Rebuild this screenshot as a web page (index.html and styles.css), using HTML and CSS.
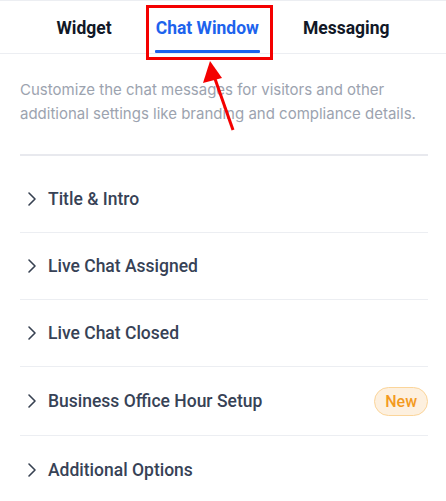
FILE: index.html
```html
<!DOCTYPE html>
<html lang="en">
<head>
  <meta charset="utf-8" />
  <meta name="viewport" content="width=device-width, initial-scale=1" />
  <title>Chat Window settings</title>
  <link rel="stylesheet" href="styles.css">
</head>
<body>
  <div class="panel">
    <div class="tabs">
      <div class="tab">Widget</div>
      <div class="tab active">Chat Window</div>
      <div class="tab">Messaging</div>
    </div>

    <p class="intro">Customize the chat messages for visitors and other additional settings like branding and compliance details.</p>

    <div class="sections">
      <div class="row">
        <svg class="chev" viewBox="0 0 10 16" width="10" height="16"><path d="M2 2l6 6-6 6" /></svg>
        <span class="label">Title &amp; Intro</span>
      </div>
      <div class="row">
        <svg class="chev" viewBox="0 0 10 16" width="10" height="16"><path d="M2 2l6 6-6 6" /></svg>
        <span class="label">Live Chat Assigned</span>
      </div>
      <div class="row">
        <svg class="chev" viewBox="0 0 10 16" width="10" height="16"><path d="M2 2l6 6-6 6" /></svg>
        <span class="label">Live Chat Closed</span>
      </div>
      <div class="row tall">
        <svg class="chev" viewBox="0 0 10 16" width="10" height="16"><path d="M2 2l6 6-6 6" /></svg>
        <span class="label">Business Office Hour Setup</span>
        <span class="badge">New</span>
      </div>
      <div class="row">
        <svg class="chev" viewBox="0 0 10 16" width="10" height="16"><path d="M2 2l6 6-6 6" /></svg>
        <span class="label">Additional Options</span>
      </div>
    </div>
  </div>

  <!-- callout around the active tab -->
  <div class="callout"></div>
  <svg class="arrow" width="446" height="501" viewBox="0 0 446 501">
    <line x1="233" y1="130" x2="214" y2="76" stroke="#f40000" stroke-width="3" />
    <polygon points="210,61 203,83 222,78" fill="#f40000" />
  </svg>
</body>
</html>
```

FILE: styles.css
```css
:root { --text:#111827; --row:#374256; --muted:#9ca3af; --line:#eceef2; --accent:#1d63ed; }
body { margin:0; background:#fff; font-family: Roboto, "Noto Sans", sans-serif; color:var(--text); }
.panel { width:446px; border-top:1px solid #eceef2; }

.tabs { display:flex; justify-content:center; border-bottom:1px solid var(--line); height:52px; }
.tab { padding:0 22px; font-size:17.5px; font-weight:700; line-height:54px; color:var(--text); }
.tab.active { color:var(--accent); position:relative; }
.tab.active::after { content:""; position:absolute; left:21px; right:21px; bottom:0; height:3px; background:var(--accent); border-radius:1px; }

.intro { margin:0; padding:24px 20px 0; font-family: Inter, Roboto, sans-serif; font-size:15px; line-height:24px; color:var(--muted); }

.sections { margin:28px 18px 0 20px; border-top:2px solid #e8e9ee; }
.row { display:flex; align-items:center; gap:11px; height:67px; padding:0 0 0 7px; border-bottom:1px solid var(--line); box-sizing:border-box; }
.row:first-child { height:77px; padding-top:10px; }
.row.tall { height:69px; }
.row:last-child { border-bottom:0; }
.chev { fill:none; stroke:#374151; stroke-width:1.6; stroke-linecap:round; stroke-linejoin:round; flex:none; }
.label { font-size:17.5px; font-weight:500; color:var(--row); }
.badge { margin-left:auto; padding:4px 10px; border:1px solid #fbd59a; border-radius:999px; background:#fdf0df; color:#f39a1e; font-size:16px; font-weight:500; }

.callout { position:absolute; left:146px; top:5px; width:121px; height:49px; border:3px solid #f40000; }
.arrow { position:absolute; left:0; top:0; pointer-events:none; }
```
